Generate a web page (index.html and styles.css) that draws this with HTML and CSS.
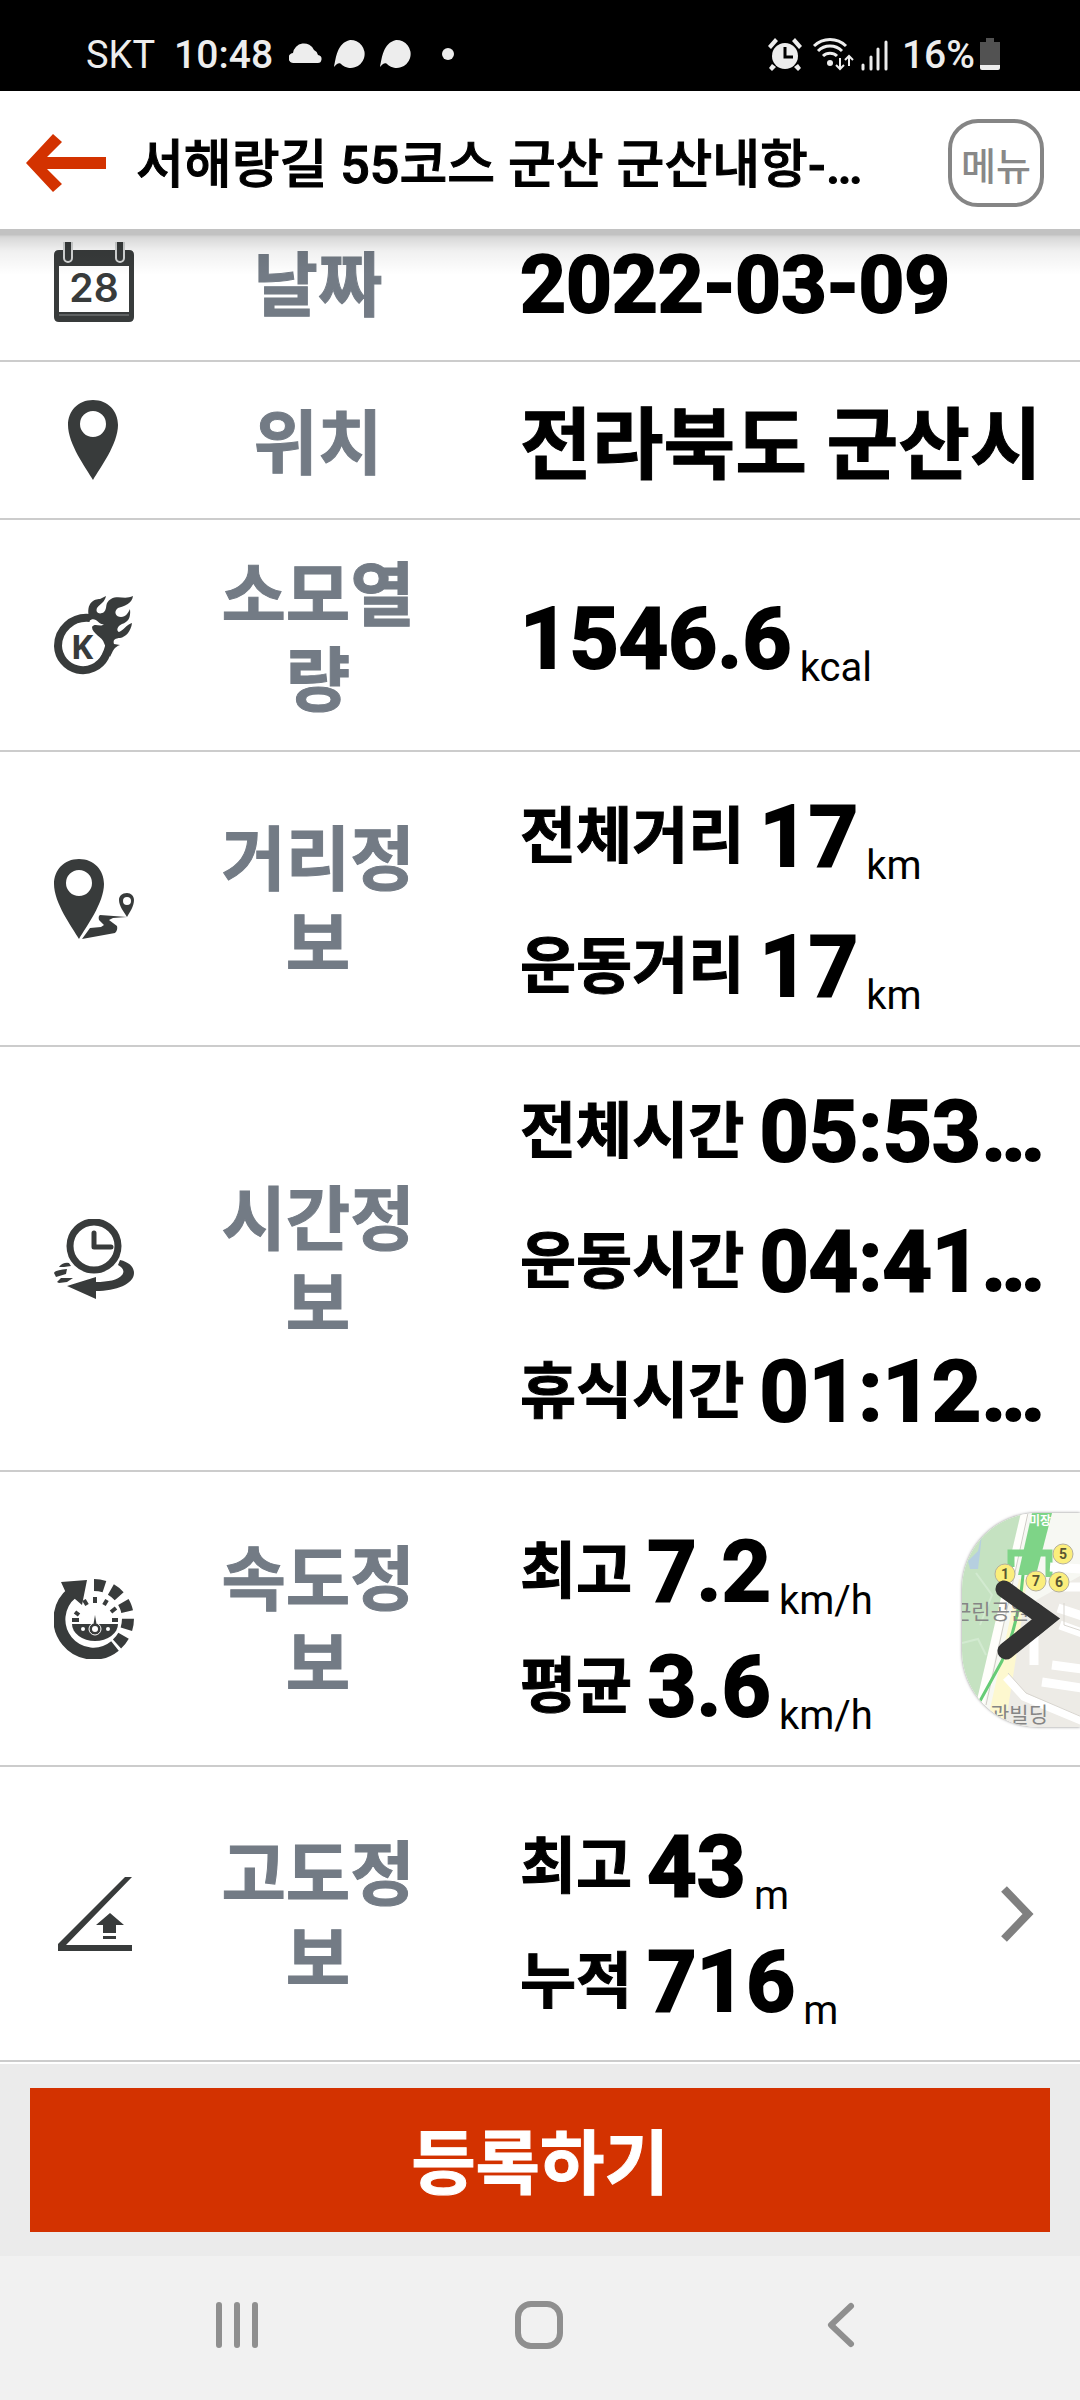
FILE: index.html
```html
<!DOCTYPE html>
<html lang="ko">
<head>
<meta charset="utf-8">
<meta name="viewport" content="width=device-width, initial-scale=1">
<title>서해랑길 55코스</title>
<link rel="stylesheet" href="styles.css">
</head>
<body>
<div class="status-bar">
  <span class="carrier">SKT</span>
  <span class="clock">10:48</span>
  <svg class="notices" width="168" height="32" viewBox="0 0 168 32" fill="#ededed" aria-hidden="true">
    <path d="M5 25a5 5 0 0 1-1-10 11 11 0 0 1 21-3 7 7 0 0 1 4 5 4 4 0 0 1-1 8z"/>
    <path d="M61 2a14 14 0 1 1-8 25c-2-3-5-2-8 2 2-9 3-24 16-27z"/>
    <path d="M107 2a14 14 0 1 1-8 25c-2-3-5-2-8 2 2-9 3-24 16-27z"/>
    <circle cx="159" cy="16" r="6"/>
  </svg>
  <svg class="system" width="122" height="34" viewBox="0 0 122 34" aria-hidden="true">
    <g fill="#ededed">
      <circle cx="17" cy="19" r="13"/>
      <path d="M4 27l4 3-4 4-3-3zM30 27l-4 3 4 4 3-3zM0 9l7-8 3 3-7 8zM34 9l-7-8-3 3 7 8z"/>
      <circle cx="62" cy="26" r="3"/>
    </g>
    <path d="M17 10v10h8" fill="none" stroke="#000" stroke-width="3"/>
    <g fill="none" stroke="#ededed" stroke-width="3">
      <path d="M46 9a23 23 0 0 1 32 0M50 14a17 17 0 0 1 24 0M55 19a10 10 0 0 1 14 0"/>
      <path d="M72 21v10M68 28l4 4 4-4M81 29V20M77 23l4-4 4 4" stroke-width="2"/>
      <path d="M95 28v4M103 20v12M110 12v20M118 5v27" stroke-linecap="round"/>
    </g>
  </svg>
  <span class="charge">16%</span>
  <svg width="20" height="34" viewBox="0 0 20 34" aria-hidden="true">
    <path d="M6 1h8v4h6v23H0V5h6z" fill="#525252"/>
    <path d="M0 28h20v3q0 2-2 2H2q-2 0-2-2z" fill="#ededed"/>
  </svg>
</div>

<header class="app-bar">
  <button class="back" type="button" aria-label="뒤로">
    <svg width="80" height="58" viewBox="0 0 80 58" aria-hidden="true"><path d="M0 29L27 0l9 8-15 15h59v12H21l15 15-9 8z" fill="#d33200"/></svg>
  </button>
  <h1 class="title">서해랑길 55코스 군산 군산내항-…</h1>
  <button class="menu" type="button">메뉴</button>
</header>

<main class="record">
  <ul class="rows">
    <li class="row">
      <svg class="icon" viewBox="0 0 80 80" aria-hidden="true">
        <path d="M5 8h70q5 0 5 5v62q0 5-5 5H5q-5 0-5-5V13q0-5 5-5z"/>
        <path d="M5 24h70v46H5z" fill="#fff"/>
        <path d="M5 73h70" stroke="#85898a" stroke-width="1"/>
        <path d="M14 0v16M66 0v16" stroke="#d5d7d7" stroke-width="10" stroke-linecap="round"/>
        <path d="M14 0v16M66 0v16" stroke="#383b3b" stroke-width="6" stroke-linecap="round"/>
        <text class="icon-day" x="40" y="60" text-anchor="middle">28</text>
      </svg>
      <span class="label">날짜</span>
      <div class="values"><p class="line plain">2022-03-09</p></div>
    </li>
    <li class="row">
      <svg class="icon" viewBox="0 0 80 80" aria-hidden="true">
        <path fill-rule="evenodd" d="M39 0C24 0 14 11 14 25c0 19 18 43 25 55 7-12 25-36 25-55C64 11 54 0 39 0zm0 11a13 13 0 1 1 0 26 13 13 0 0 1 0-26z"/>
      </svg>
      <span class="label">위치</span>
      <div class="values"><p class="line plain place">전라북도 군산시</p></div>
    </li>
    <li class="row">
      <svg class="icon" viewBox="0 0 80 80" aria-hidden="true">
        <path d="M36 23C18 21 4 35 4 51a25 25 0 0 0 47 11c4-8 5-12 4-20" fill="none" stroke="#383b3b" stroke-width="8"/>
        <path d="M35 22C32 8 40 4 46 4l6-3c-1 6-6 8-9 12-2 5 3 7 7 4 4-4 0-9 7-13 7-4 14 1 22-3-1 8-9 10-15 12-5 4-2 9 3 9s7-4 9-8c1 9-2 13-8 15-5 2-6 7-3 8 4-1 8-8 13-9-1 8-6 14-12 15-4 0-8 2-6 6l6 1c-6 2-7 6-10 12l-6-14c-1-6-12-9-12-16 3-5 8 1 12-3-5 2-8-9-15-3z"/>
        <text class="icon-letter" x="28" y="64" text-anchor="middle">K</text>
      </svg>
      <span class="label">소모열량</span>
      <div class="values"><p class="line"><strong class="number">1546.6<sub>kcal</sub></strong></p></div>
    </li>
    <li class="row">
      <svg class="icon" viewBox="0 0 80 80" aria-hidden="true">
        <path fill-rule="evenodd" d="M25 0C10 0 0 11 0 25c0 19 18 43 25 55 7-12 25-36 25-55C50 11 40 0 25 0zm0 11a13 13 0 1 1 0 26 13 13 0 0 1 0-26z"/>
        <path fill-rule="evenodd" d="M73 34c-5 0-8 3-8 7 0 6 5 12 8 17 3-5 7-11 7-17 0-4-3-7-7-7zm0 4a4 4 0 1 1 0 8 4 4 0 0 1 0-8z"/>
        <path d="M73 58L46 56q-2 1-1 5l5 5-3 2-11 1-8 11 33-6q3-3 2-7l-8-6 4-2z"/>
      </svg>
      <span class="label">거리정보</span>
      <div class="values">
        <p class="line"><span class="name">전체거리</span><strong class="number">17<sub>km</sub></strong></p>
        <p class="line"><span class="name">운동거리</span><strong class="number">17<sub>km</sub></strong></p>
      </div>
    </li>
    <li class="row">
      <svg class="icon" viewBox="0 0 80 80" aria-hidden="true">
        <circle cx="40" cy="27" r="24" fill="none" stroke="#383b3b" stroke-width="7"/>
        <path d="M40 14v14h17" fill="none" stroke="#383b3b" stroke-width="5" stroke-linecap="round" stroke-linejoin="round"/>
        <path d="M13 67l29-9v5c12 0 22-2 26-7 3-4 1-7-4-10l2-5c9 2 14 7 14 13 0 11-18 18-38 18v8z"/>
        <path d="M5 48q4-5 10-4l2 3-7 1zM0 54q1-3 13-4l-1 5-10 3zM3 63l4-4 12 0-6 4-8 1z"/>
      </svg>
      <span class="label">시간정보</span>
      <div class="values">
        <p class="line"><span class="name">전체시간</span><strong class="number">05:53…</strong></p>
        <p class="line"><span class="name">운동시간</span><strong class="number">04:41…</strong></p>
        <p class="line"><span class="name">휴식시간</span><strong class="number">01:12…</strong></p>
      </div>
    </li>
    <li class="row">
      <svg class="icon" viewBox="0 0 80 80" aria-hidden="true">
        <g fill="none" stroke="#383b3b" stroke-width="12">
          <path d="M61 67A34 34 0 0 1 18 14"/>
          <path d="M40 6A34 34 0 0 1 63 65" pathLength="138" stroke-dasharray="18 12"/>
        </g>
        <path d="M7 3l26-2-5 25-7-6-9-6z"/>
        <path d="M18 45h46a23 17 0 0 1-46 0z"/>
        <path d="M21 33l4 3M18 41h7M30 21l3 5M41 18v6M53 21l-3 5M62 29l-5 4M64 41h-6" fill="none" stroke="#383b3b" stroke-width="4"/>
        <circle cx="41" cy="50" r="6" stroke="#fff" stroke-width="1"/>
        <path d="M39 48l2-12 2 12z"/>
        <g fill="#fff"><circle cx="41" cy="50" r="3"/><circle cx="29" cy="50" r="2"/><circle cx="54" cy="50" r="2"/></g>
      </svg>
      <span class="label">속도정보</span>
      <div class="values compact">
        <p class="line"><span class="name">최고</span><strong class="number">7.2<sub>km/h</sub></strong></p>
        <p class="line"><span class="name">평균</span><strong class="number">3.6<sub>km/h</sub></strong></p>
      </div>
      <button class="map-tab" type="button" aria-label="지도 보기">
        <svg width="118" height="214" viewBox="0 0 118 214" aria-hidden="true">
          <path d="M0 0h120v214H0z" fill="#f7f8f3"/>
          <path d="M58 96l62-34v152H30z" fill="#edebe6"/>
          <path d="M0 0h60L16 190l-16 8z" fill="#c5e2c1"/>
          <path d="M20 20l-4 18-10 10 2 8h8l2-16z" fill="#b6cfe0"/>
          <path d="M0 130l16-4 8 16M14 60l16 22-12 30" fill="none" stroke="#d2ead0" stroke-width="2"/>
          <path d="M63 0L17 196" stroke="#fffefb" stroke-width="8"/>
          <path d="M66 0L24 192" stroke="#cfccc6" stroke-width="1"/>
          <path d="M57 66h8l-8 60-14 88H24z" fill="#fdf8cf"/>
          <path d="M61 62Q57 110 40 148L18 188" fill="none" stroke="#67cc76" stroke-width="3"/>
          <path d="M70 0h20L74 62H56z" fill="#7ed487"/>
          <path d="M49 54V40h14M76 40h11v24" fill="none" stroke="#7ed487" stroke-width="7"/>
          <g fill="none" stroke="#fff">
            <path d="M44 164l18 20 58 24" stroke-width="8"/>
            <path d="M72 110v42M96 95l24 8M98 112l22 8M90 152l30 4M80 169l40 6M88 54l32 2M94 74h26" stroke-width="9"/>
          </g>
          <path d="M46 160l18 20 56 24M102 90v22l18 6" fill="none" stroke="#d8d5cf" stroke-width="1"/>
          <g fill="#fbee7c" stroke="#b5b09a" stroke-width="1">
            <circle cx="43" cy="61" r="10"/><circle cx="74" cy="68" r="10"/><circle cx="97" cy="69" r="10"/><circle cx="101" cy="41" r="10"/>
          </g>
          <g class="map-exit" text-anchor="middle">
            <text x="43" y="66">1</text><text x="74" y="73">7</text><text x="97" y="74">6</text><text x="101" y="46">5</text>
          </g>
          <text class="map-station" x="67" y="12">미장</text>
          <text class="map-place" x="-10" y="106">근린공원</text>
          <text class="map-place" x="28" y="209">관빌딩</text>
          <path d="M42 76l42 30-40 32" fill="none" stroke="#333" stroke-width="17" stroke-linecap="round"/>
          <path d="M76 90l20 16-20 17z" fill="#333"/>
        </svg>
      </button>
    </li>
    <li class="row">
      <svg class="icon" viewBox="0 0 80 80" aria-hidden="true">
        <path d="M71 3h7L12 71h66v6H4v-7z"/>
        <path d="M56 39l14 12h-8v8H49v-8h-7zM49 62h13v3H49z"/>
      </svg>
      <span class="label">고도정보</span>
      <div class="values compact">
        <p class="line"><span class="name">최고</span><strong class="number">43<sub>m</sub></strong></p>
        <p class="line"><span class="name">누적</span><strong class="number">716<sub>m</sub></strong></p>
      </div>
      <button class="more" type="button" aria-label="고도 상세">
        <svg width="34" height="58" viewBox="0 0 34 58" aria-hidden="true"><path d="M4 4l24 25L4 54" fill="none" stroke="#808080" stroke-width="8"/></svg>
      </button>
    </li>
  </ul>
</main>

<footer class="actions">
  <button class="submit" type="button">등록하기</button>
</footer>

<nav class="system-nav">
  <button type="button" aria-label="최근 앱"><svg width="48" height="48" viewBox="0 0 48 48"><path d="M6 4v40M24 4v40M42 4v40" stroke-width="6"/></svg></button>
  <button type="button" aria-label="홈"><svg width="48" height="48" viewBox="0 0 48 48"><rect x="3" y="3" width="42" height="42" rx="13" stroke-width="6"/></svg></button>
  <button type="button" aria-label="뒤로"><svg width="48" height="48" viewBox="0 0 48 48"><path d="M34 5L14 24l20 19" stroke-width="6"/></svg></button>
</nav>
</body>
</html>
```
FILE: styles.css
```css
* {
  box-sizing: border-box;
}

body {
  display: flex;
  flex-direction: column;
  min-height: 100vh;
  margin: 0;
  background: #fff;
  color: #000;
  font-family: Roboto, "Noto Sans CJK KR", sans-serif;
}

button {
  margin: 0;
  padding: 0;
  border: 0;
  background: none;
  color: inherit;
  font-family: inherit;
  cursor: pointer;
}

svg {
  display: block;
  flex: none;
}

/* Phone status bar */

.status-bar {
  position: relative;
  z-index: 2;
  display: flex;
  align-items: center;
  height: 91px;
  padding: 16px 80px 0 86px;
  background: #000;
  color: #ededed;
  font-size: 39px;
  line-height: 50px;
}

.carrier {
  padding-top: 2px;
  font-size: 38px;
}

.clock {
  margin: 0 16px 0 19px;
  padding-top: 2px;
  font-weight: 500;
}

.system {
  margin: 0 12px 0 auto;
}

.charge {
  margin-right: 5px;
  padding-top: 2px;
  font-weight: 500;
}

/* Title bar */

.app-bar {
  position: relative;
  z-index: 1;
  display: flex;
  align-items: center;
  height: 138px;
  padding: 6px 36px 0 26px;
  background: #fff;
}

.app-bar::after {
  content: "";
  position: absolute;
  top: 100%;
  left: 0;
  right: 0;
  height: 46px;
  background: linear-gradient(rgb(0 0 0 / 24%) 6px, rgb(0 0 0 / 18%) 7px, rgb(0 0 0 / 15%) 9px, rgb(0 0 0 / 6%) 22px, transparent);
  pointer-events: none;
}

.title {
  flex: 1;
  min-width: 0;
  margin: 0 16px 0 30px;
  padding-top: 6px;
  overflow: hidden;
  font-size: 52px;
  font-weight: 500;
  line-height: 72px;
  white-space: nowrap;
  -webkit-text-stroke: 1px;
}

.menu {
  width: 96px;
  height: 88px;
  border: 4px solid #858585;
  border-radius: 30px;
  color: #888;
  font-size: 38px;
  font-weight: 500;
}

/* Record details; the list sits scrolled slightly under the title bar */

.record {
  flex: 1;
  padding-bottom: 2px;
}

.rows {
  margin: -25px 0 0;
  padding: 0;
  list-style: none;
}

.row {
  position: relative;
  display: grid;
  grid-template-columns: 80px 256px 1fr auto;
  column-gap: 56px;
  align-items: center;
  padding: 0 38px 0 54px;
  border-bottom: 2px solid #ccc;
}

.icon {
  width: 80px;
  height: 80px;
  fill: #383b3b;
}

.icon-day {
  font: 600 39px Inter, sans-serif;
}

.icon-letter {
  font: 700 34px "Open Sans", sans-serif;
}

.label {
  padding: 35px 0 25px;
  color: #737b85;
  font-size: 70px;
  font-weight: 700;
  line-height: 85px;
  text-align: center;
  -webkit-text-stroke: 1px;
}

.values {
  min-width: 0;
  margin-right: -56px;
  padding: 16px 0 17px 18px;
}

.compact {
  padding: 31px 0 32px 18px;
}

.line {
  display: flex;
  align-items: center;
  gap: 15px;
  height: 130px;
  margin: 0;
  padding-top: 8px;
  line-height: 1;
  white-space: nowrap;
}

.compact .line {
  height: 115px;
  padding-top: 23px;
}

.plain {
  height: 123px;
  padding-top: 6px;
  font-size: 80px;
  font-weight: 700;
  -webkit-text-stroke: 2px;
}

.place {
  padding-top: 14px;
  font-size: 78px;
  -webkit-text-stroke: 1px;
}

.name {
  font-size: 61px;
  font-weight: 700;
  -webkit-text-stroke: 1px;
}

.number {
  font-size: 86px;
  font-weight: 700;
  -webkit-text-stroke: 2px;
}

.number sub {
  margin-left: 8px;
  font-size: 40px;
  font-weight: 400;
  line-height: 0;
  vertical-align: -13px;
  -webkit-text-stroke: 0;
}

.more {
  margin-right: 8px;
}

.map-tab {
  position: absolute;
  top: 41px;
  right: 0;
  height: 214px;
  overflow: hidden;
  border-radius: 76px 0 0 76px;
  box-shadow: 0 0 3px rgb(0 0 0 / 50%);
}

.map-exit {
  fill: #5a5632;
  font: 700 14px Roboto, sans-serif;
}

.map-station {
  fill: #fff;
  font: 700 12px "Noto Sans CJK KR", sans-serif;
}

.map-place {
  fill: #858585;
  font: 400 21px "Noto Sans CJK KR", sans-serif;
}

/* Bottom action and system navigation */

.actions {
  padding: 24px 30px;
  background: #ebebeb;
}

.submit {
  width: 100%;
  height: 144px;
  padding-bottom: 4px;
  background: #d33200;
  color: #fff;
  font-size: 70px;
  font-weight: 700;
  -webkit-text-stroke: 1px;
}

.system-nav {
  display: grid;
  grid-template-columns: repeat(3, 1fr);
  height: 144px;
  padding: 0 88px 0 86px;
  background: #f1f1f1;
}

.system-nav button {
  display: grid;
  place-items: center;
  padding-bottom: 6px;
}

.system-nav svg {
  fill: none;
  stroke: #8f8f8f;
  stroke-linecap: round;
  stroke-linejoin: round;
}
```
